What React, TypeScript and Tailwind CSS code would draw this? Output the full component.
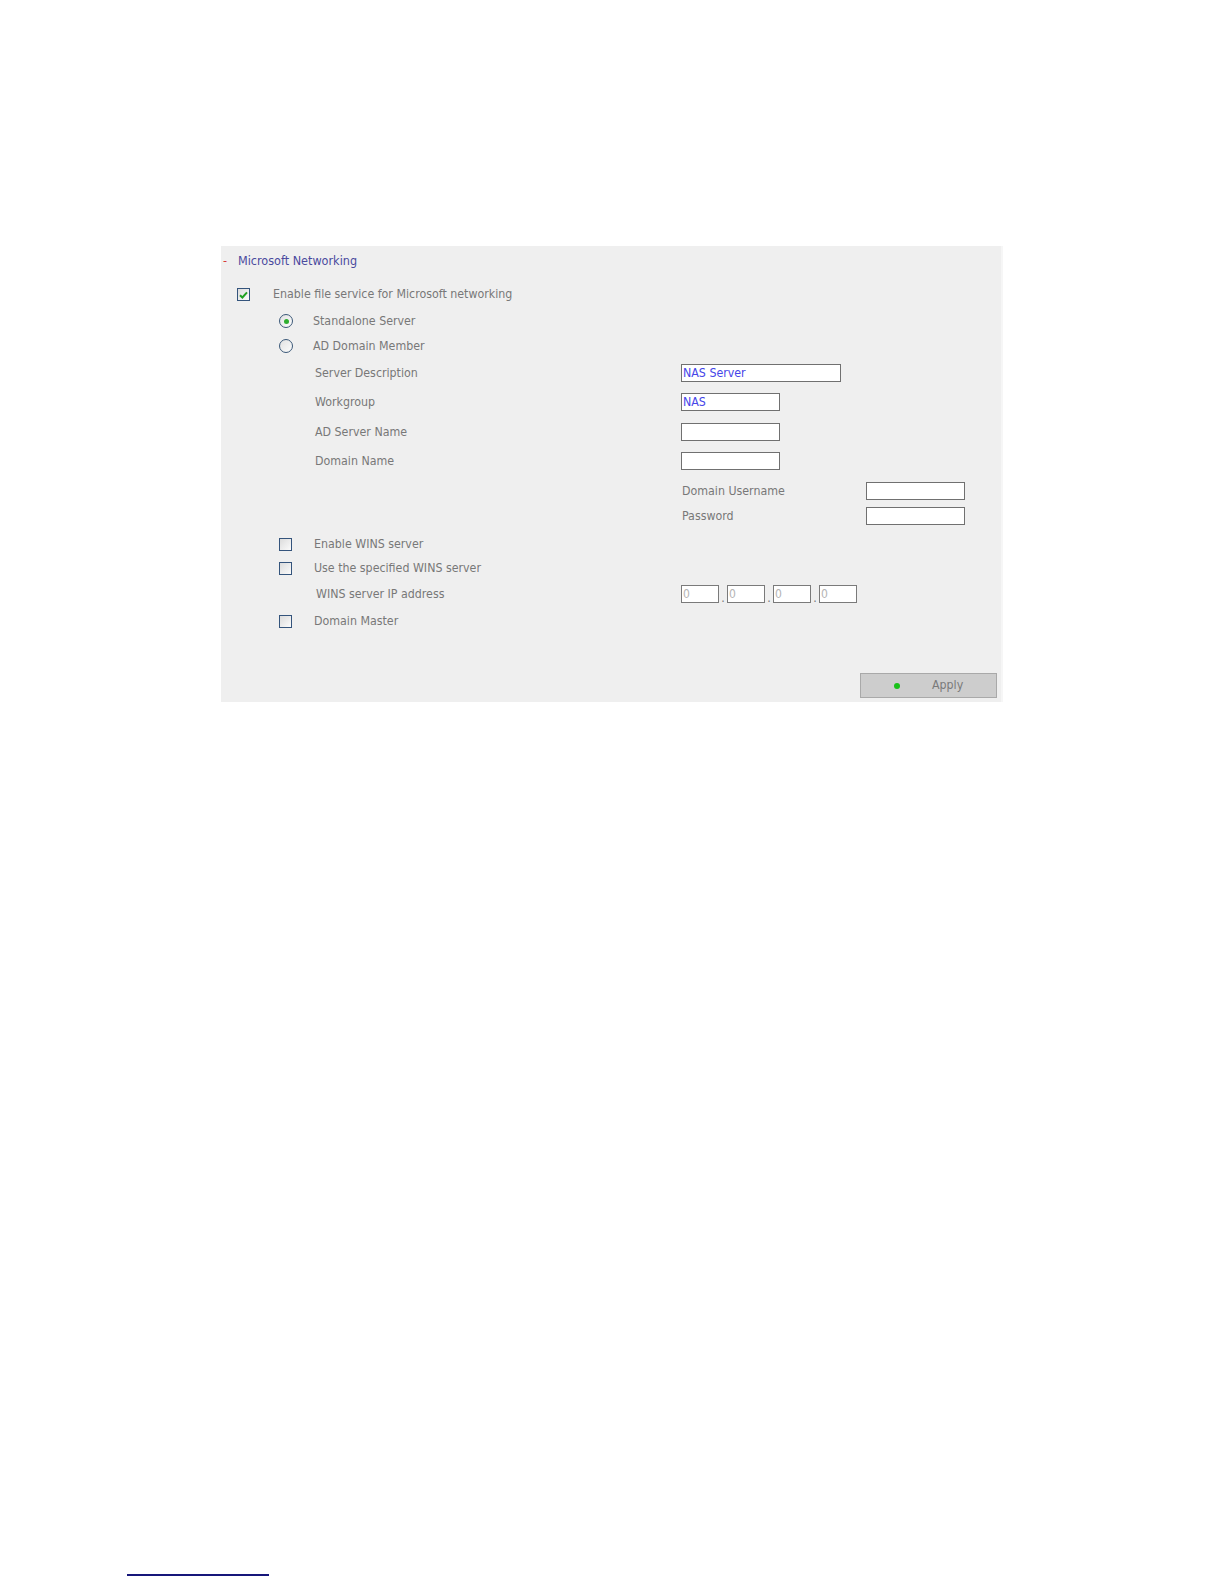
import React from "react";

const font = { fontFamily: '"DejaVu Sans Condensed", "DejaVu Sans", sans-serif' };

function CheckBox({ checked }: { checked?: boolean }) {
  return (
    <span className="flex h-[13px] w-[13px] items-center justify-center border border-[#34547c] bg-gradient-to-br from-[#dcdcdc] to-[#fbfbfb]">
      {checked && (
        <svg width="9" height="8" viewBox="0 0 9 8">
          <path d="M1 4.2 L3.4 6.5 L8 1.3" fill="none" stroke="#21a121" strokeWidth="2" />
        </svg>
      )}
    </span>
  );
}

function Radio({ checked }: { checked?: boolean }) {
  return (
    <span className="flex h-[14px] w-[14px] items-center justify-center rounded-full border border-[#3b5878] bg-gradient-to-br from-[#e2e2e2] to-[#fcfcfc]">
      {checked && <span className="h-[5px] w-[5px] rounded-full bg-[#2fae2f]" />}
    </span>
  );
}

function TextBox({ w, value }: { w: string; value?: string }) {
  return (
    <span
      className={`flex h-[18px] items-center border border-[#707070] bg-white pl-[1px] text-[12.3px] text-[#4646e8] ${w}`}
    >
      {value}
    </span>
  );
}

function IpBox() {
  return (
    <span className="flex h-[18px] w-[38px] items-center border border-[#7a7a7a] bg-white pl-[1px] text-[12px] text-[#b4b4b4]">
      0
    </span>
  );
}

export default function App() {
  return (
    <div className="relative h-[1584px] w-[1224px] bg-white text-[12.3px] text-[#787878]" style={font}>
      <div className="h-[246px]" />
      <div className="ml-[221px] flex h-[456px] w-[780px] flex-col bg-[#efefef] shadow-[2px_0_0_#f6f6f6]">
        {/* header */}
        <div className="flex h-[30px] items-center">
          <span className="ml-[2px] w-[15px] text-[12.5px] text-[#d83a3a]">-</span>
          <span className="text-[12.5px] text-[#4a4a9e]">Microsoft Networking</span>
        </div>

        <div className="flex h-[37px] items-center">
          <span className="ml-[16px]">
            <CheckBox checked />
          </span>
          <span className="ml-[23px]">Enable file service for Microsoft networking</span>
        </div>

        <div className="flex h-[16px] items-center">
          <span className="ml-[58px]">
            <Radio checked />
          </span>
          <span className="ml-[20px]">Standalone Server</span>
        </div>
        <div className="flex h-[34px] items-center">
          <span className="ml-[58px]">
            <Radio />
          </span>
          <span className="ml-[20px]">AD Domain Member</span>
        </div>

        <div className="flex h-[20px] items-center">
          <span className="ml-[94px] w-[366px]">Server Description</span>
          <TextBox w="w-[160px]" value="NAS Server" />
        </div>
        <div className="flex h-[38px] items-center">
          <span className="ml-[94px] w-[366px]">Workgroup</span>
          <TextBox w="w-[99px]" value="NAS" />
        </div>
        <div className="flex h-[22px] items-center">
          <span className="ml-[94px] w-[366px]">AD Server Name</span>
          <TextBox w="w-[99px]" />
        </div>
        <div className="flex h-[36px] items-center">
          <span className="ml-[94px] w-[366px]">Domain Name</span>
          <TextBox w="w-[99px]" />
        </div>

        <div className="flex h-[24px] items-center">
          <span className="ml-[461px] w-[184px]">Domain Username</span>
          <TextBox w="w-[99px]" />
        </div>
        <div className="flex h-[26px] items-center">
          <span className="ml-[461px] w-[184px]">Password</span>
          <TextBox w="w-[99px]" />
        </div>

        <div className="flex h-[30px] items-center">
          <span className="ml-[58px]">
            <CheckBox />
          </span>
          <span className="ml-[22px]">Enable WINS server</span>
        </div>
        <div className="flex h-[18px] items-center">
          <span className="ml-[58px]">
            <CheckBox />
          </span>
          <span className="ml-[22px]">Use the specified WINS server</span>
        </div>
        <div className="flex h-[34px] items-center">
          <span className="ml-[95px] w-[365px]">WINS server IP address</span>
          <div className="flex items-end">
            <IpBox />
            <span className="w-[8px] text-center leading-[10px]">.</span>
            <IpBox />
            <span className="w-[8px] text-center leading-[10px]">.</span>
            <IpBox />
            <span className="w-[8px] text-center leading-[10px]">.</span>
            <IpBox />
          </div>
        </div>
        <div className="flex h-[20px] items-center">
          <span className="ml-[58px]">
            <CheckBox />
          </span>
          <span className="ml-[22px]">Domain Master</span>
        </div>

        <div className="mt-[42px] flex">
          <button className="ml-[639px] flex h-[25px] w-[137px] items-center border border-[#a9a9a9] bg-[#cdcdcd] text-[12.3px] text-[#7a7a7a]">
            <span className="ml-[33px] h-[6px] w-[6px] rounded-full bg-[#19c119]" />
            <span className="ml-[32px]">Apply</span>
          </button>
        </div>
      </div>

      <div className="ml-[127px] mt-[872px] h-[2px] w-[142px] bg-[#16167a]" />
    </div>
  );
}
